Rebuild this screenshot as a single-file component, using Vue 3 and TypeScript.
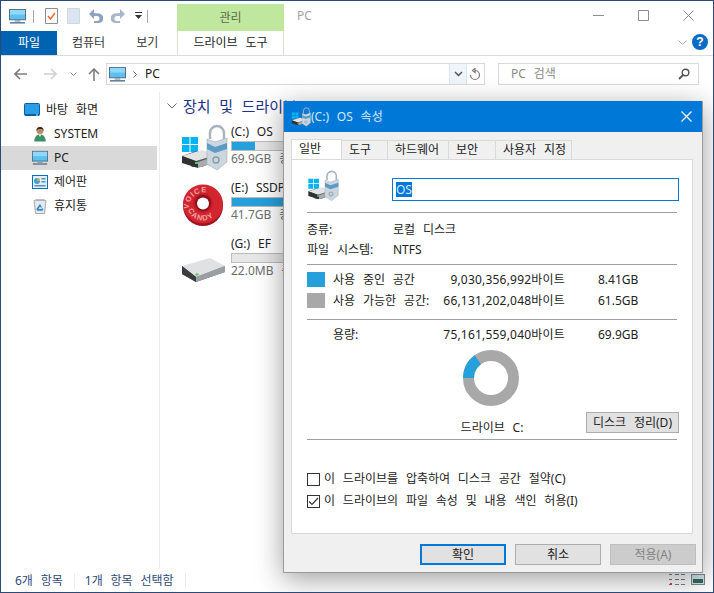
<script setup lang="ts">
// Windows 10 Explorer with the drive properties dialog on top
interface NavItem { label: string; icon: string; indent: boolean; active?: boolean }
interface Drive { name: string; size: string; icon: string; used: number }

const navItems: NavItem[] = [
  { label: '바탕 화면', icon: '#i-desktop', indent: false },
  { label: 'SYSTEM', icon: '#i-user', indent: true },
  { label: 'PC', icon: '#i-pc', indent: true, active: true },
  { label: '제어판', icon: '#i-panel', indent: true },
  { label: '휴지통', icon: '#i-bin', indent: true },
]

const drives: Drive[] = [
  { name: '(C:) OS', size: '69.9GB 중', icon: '#i-os', used: 23 },
  { name: '(E:) SSDPR', size: '41.7GB 중', icon: '#i-candy', used: 93 },
  { name: '(G:) EF', size: '22.0MB 중', icon: '#i-hdd', used: 0 },
]

const tabs = ['도구', '하드웨어', '보안', '사용자 지정']
const tabWidths = [46, 61, 47, 76]
</script>

<template>
  <div class="window">
    <svg width="0" height="0" class="defs">
      <defs>
        <symbol id="i-pc" viewBox="0 0 18 16">
          <rect x="0.5" y="0.5" width="17" height="11" fill="#5cc0f0" stroke="#4a6a86" />
          <rect x="1" y="1" width="16" height="5" fill="#8fd8f8" />
          <rect x="6" y="12" width="6" height="1.5" fill="#8aa0b4" />
          <rect x="1" y="14" width="16" height="1.5" fill="#51718f" />
        </symbol>
        <symbol id="i-desktop" viewBox="0 0 16 14">
          <rect x="0.5" y="0.5" width="15" height="12" rx="1" fill="#2a9fe8" stroke="#0f5f9c" />
          <rect x="1" y="11" width="14" height="2" fill="#0f5f9c" />
          <rect x="12" y="11.5" width="2" height="1" fill="#d8efff" />
        </symbol>
        <symbol id="i-user" viewBox="0 0 16 18">
          <circle cx="8" cy="5" r="4" fill="#b98a68" />
          <path d="M4 5a4 4 0 0 1 8 0c-1-2-6-2-8 0z" fill="#3d2a1e" />
          <path d="M1.5 17.5c0-5 2.5-8 6.5-8s6.5 3 6.500 8z" fill="#3f8f66" />
          <path d="M6.500 9.500h3l-1.500 3z" fill="#eef5ee" />
        </symbol>
        <symbol id="i-panel" viewBox="0 0 16 14">
          <rect x="0.5" y="0.5" width="15" height="13" fill="#dff1fb" stroke="#0f6fb4" />
          <circle cx="5" cy="6" r="3" fill="#3aa0dc" />
          <path d="M5 6V3a3 3 0 0 1 3 3z" fill="#f2a52d" />
          <rect x="9.500" y="3" width="4" height="1.500" fill="#5a8fb8" />
          <rect x="9.500" y="6" width="4" height="1.500" fill="#5a8fb8" />
          <rect x="2.500" y="10" width="11" height="1.500" fill="#5a8fb8" />
        </symbol>
        <symbol id="i-bin" viewBox="0 0 14 16">
          <path d="M1 2.500h12l-1.500 13h-9z" fill="#e4e9ed" stroke="#8e99a3" stroke-width="0.800" />
          <path d="M1 2.500l2-1.500h8l2 1.500z" fill="#b7c0c8" />
          <path d="M7 6l2 3.500h-1.500l-.5-1-1.500 2.500h3l.8-1.200 1 1.700-1 1.300h-5l-1-1.800z" fill="#2f86c8" />
        </symbol>
        <symbol id="i-hdd" viewBox="0 0 48 48">
          <path d="M2 30v8l14 8 29-10v-6z" fill="#55595d" />
          <path d="M16 41l29-11v6l-29 10z" fill="#9b9fa3" />
          <path d="M2 30l28-8 15 8-29 11z" fill="#dfe1e2" />
          <path d="M2 30l14 11v5l-14-8z" fill="#3a3d40" />
          <rect x="15.500" y="37.500" width="3" height="2" fill="#4ccb4c" />
        </symbol>
        <symbol id="i-os" viewBox="0 0 48 48">
          <path d="M2 13h7.500v7H2zM10.500 13H18v7h-7.500zM2 21h7.500v7H2zM10.500 21H18v7h-7.500z" fill="#05b4f0" />
          <path d="M2 32l10 11h10l14-6v-8l-20-2z" fill="#55595d" />
          <path d="M2 32l20-6 14 5-20 6z" fill="#e2e3e4" />
          <path d="M2 32l16 6v6l-16-5z" fill="#2f3235" />
          <path d="M18 38l18-6v6l-18 6z" fill="#a8acaf" />
          <rect x="15" y="38" width="3" height="2" fill="#4ccb4c" />
          <path d="M30 15V9a7 7 0 0 1 14 0v6" fill="none" stroke="#a9b2b9" stroke-width="2.400" />
          <path d="M27 15l8 3 12-4v24l-10 8-10-6z" fill="#cbd6de" stroke="#9eaeba" stroke-width="0.600" />
          <path d="M27 19l8 4 12-4v6l-12 4-8-4z" fill="#5c9cc4" />
          <circle cx="36" cy="36" r="3" fill="none" stroke="#8c9aa5" stroke-width="1.400" />
        </symbol>
        <symbol id="i-candy" viewBox="0 0 48 48">
          <ellipse cx="23" cy="26" rx="20" ry="20" fill="#a01420" />
          <ellipse cx="23" cy="24" rx="20" ry="19.500" fill="#d3252f" />
          <circle cx="23" cy="23" r="10" fill="#c01c28" />
          <circle cx="23" cy="23" r="8" fill="#8e0f1a" />
          <circle cx="23" cy="23.500" r="6" fill="#fff" />
          <path id="candy-top" d="M9 29a15 15 0 0 1 28 -9" fill="none" />
          <path id="candy-bottom" d="M7 25a16 16 0 0 0 31 5" fill="none" />
          <text class="candy-text"><textPath href="#candy-top">VOICE</textPath></text>
          <text class="candy-text"><textPath href="#candy-bottom" startOffset="5">CANDY</textPath></text>
        </symbol>
      </defs>
    </svg>

    <div class="title-row">
      <svg class="qa-pc" width="17" height="15"><use href="#i-pc" /></svg>
      <span class="qa-sep"></span>
      <svg class="qa-doc" width="13" height="16" viewBox="0 0 13 16">
        <path d="M.5.500h12v15H.500z" fill="#fff" stroke="#8a8f94" />
        <path d="M3 8l2.500 3L10 5" fill="none" stroke="#e8662c" stroke-width="1.400" />
      </svg>
      <svg class="qa-blank" width="13" height="16" viewBox="0 0 13 16">
        <path d="M.5.500h12v15H.500z" fill="#dbe5f1" stroke="#cdd8e5" />
      </svg>
      <svg class="qa-undo" width="15" height="14" viewBox="0 0 15 14">
        <path d="M6 0L1 5l5 5V7h3a2.500 2.500 0 0 1 0 5H6v2h4a4.500 4.500 0 0 0 1-9.500L6 4z" fill="#8ea2bf" />
      </svg>
      <svg class="qa-redo" width="15" height="14" viewBox="0 0 15 14">
        <path d="M9 0l5 5-5 5V7H6a2.500 2.500 0 0 0 0 5h3v2H5A4.500 4.500 0 0 1 4 4.500L9 4z" fill="#a9b6ca" />
      </svg>
      <svg class="qa-drop" width="7" height="8" viewBox="0 0 7 8">
        <rect width="7" height="1" fill="#333" />
        <path d="M0 3h7L3.500 7z" fill="#333" />
      </svg>
      <span class="qa-sep last"></span>
      <div class="context-head">관리</div>
      <span class="win-title">PC</span>
      <div class="win-buttons">
        <svg width="11" height="11" viewBox="0 0 11 11"><path d="M0 5.500h11" stroke="#8c8c8c" /></svg>
        <svg width="11" height="11" viewBox="0 0 11 11"><path d="M.5.500h10v10H.5z" fill="none" stroke="#8c8c8c" /></svg>
        <svg width="11" height="11" viewBox="0 0 11 11"><path d="M.5.500l10 10M10.500.500l-10 10" stroke="#8c8c8c" /></svg>
      </div>
    </div>

    <div class="tab-row">
      <div class="file-tab">파일</div>
      <div class="rib-tab computer">컴퓨터</div>
      <div class="rib-tab view">보기</div>
      <div class="context-tab">드라이브 도구</div>
      <svg class="rib-chev" width="9" height="6" viewBox="0 0 9 6"><path d="M.5.500l4 4 4-4" fill="none" stroke="#a8a8a8" /></svg>
      <span class="help">?</span>
    </div>

    <div class="address-row">
      <svg class="nav-arrow" width="13" height="12" viewBox="0 0 13 12"><path d="M6 1L1 6l5 5M1 6h12" fill="none" stroke="#7d7d7d" stroke-width="1.600" /></svg>
      <svg class="nav-arrow fwd" width="13" height="12" viewBox="0 0 13 12"><path d="M7 1l5 5-5 5M12 6H0" fill="none" stroke="#d0d0d0" stroke-width="1.600" /></svg>
      <svg class="nav-down" width="7" height="5" viewBox="0 0 7 5"><path d="M.5.500l3 3 3-3" fill="none" stroke="#8a8a8a" /></svg>
      <svg class="nav-arrow up" width="12" height="13" viewBox="0 0 12 13"><path d="M1 6l5-5 5 5M6 1v12" fill="none" stroke="#7d7d7d" stroke-width="1.600" /></svg>
      <div class="address">
        <svg width="17" height="15"><use href="#i-pc" /></svg>
        <svg class="crumb" width="4" height="7" viewBox="0 0 4 7"><path d="M.5.500l3 3-3 3" fill="none" stroke="#666" /></svg>
        <span class="crumb-text">PC</span>
        <span class="addr-drop"><svg width="9" height="6" viewBox="0 0 9 6"><path d="M1 1l3.500 3.500L8 1" fill="none" stroke="#555" stroke-width="1.500" /></svg></span>
        <svg class="refresh" width="12" height="13" viewBox="0 0 12 13"><path d="M6 2.500a4.500 4.500 0 1 1-4.500 4.500M6 .500v4l-2.500-2z" fill="none" stroke="#777" stroke-width="1.200" /></svg>
      </div>
      <div class="search">
        <span>PC 검색</span>
        <svg width="12" height="12" viewBox="0 0 12 12"><circle cx="7.500" cy="4.500" r="3.300" fill="none" stroke="#555" stroke-width="1.400" /><path d="M5 7l-4 4" stroke="#555" stroke-width="1.800" /></svg>
      </div>
    </div>

    <div class="body-row">
      <nav class="nav">
        <div v-for="item in navItems" :key="item.label" class="nav-item" :class="{ active: item.active, indent: item.indent }">
          <svg class="nav-icon" width="16" height="16"><use :href="item.icon" /></svg>
          <span>{{ item.label }}</span>
        </div>
      </nav>
      <main class="content">
        <div class="group-head">
          <svg width="10" height="6" viewBox="0 0 10 6"><path d="M.5.500l4.500 4.500L9.500.500" fill="none" stroke="#6b6b6b" /></svg>
          <span>장치 및 드라이브 (6)</span>
        </div>
        <div v-for="d in drives" :key="d.name" class="drive">
          <svg class="drive-icon" width="48" height="48"><use :href="d.icon" /></svg>
          <div class="drive-info">
            <div class="drive-name">{{ d.name }}</div>
            <div class="drive-bar"><div class="drive-used" :style="{ width: d.used + 'px' }"></div></div>
            <div class="drive-size">{{ d.size }}</div>
          </div>
        </div>
      </main>
    </div>

    <div class="status-row">
      <span class="stat first">6개 항목</span>
      <span class="stat">1개 항목 선택함</span>
      <div class="view-icons">
        <svg width="16" height="11" viewBox="0 0 16 11"><path d="M0 .500h3M0 5.500h3M0 10.500h3M6 .500h4M6 5.500h4M6 10.500h4M12 .500h4M12 5.500h4M12 10.500h4" stroke="#6f7f90" /><rect x="1" y="9" width="2" height="2" fill="#d83b3b" /></svg>
        <svg width="14" height="11" viewBox="0 0 14 11"><rect x=".5" y=".5" width="13" height="10" fill="#cfe3ef" stroke="#7c8a96" /><rect x="2" y="5" width="10" height="4" fill="#356b55" /></svg>
      </div>
    </div>

    <!-- floating properties dialog -->
    <section class="dialog">
      <header class="dlg-title">
        <svg width="20" height="20"><use href="#i-os" /></svg>
        <span>(C:) OS 속성</span>
        <svg class="dlg-close" width="11" height="11" viewBox="0 0 11 11"><path d="M.5.500l10 10M10.500.500l-10 10" stroke="#fff" stroke-width="1.200" /></svg>
      </header>
      <div class="dlg-tabs">
        <div class="dlg-tab active">일반</div>
        <div v-for="(t, i) in tabs" :key="t" class="dlg-tab" :style="{ width: tabWidths[i] + 'px' }">{{ t }}</div>
      </div>
      <div class="panel">
        <div class="name-row">
          <svg width="32" height="32"><use href="#i-os" /></svg>
          <div class="name-input"><span class="sel">OS</span></div>
        </div>
        <hr class="sep" />
        <div class="info-row type"><span class="info-key">종류:</span><span>로컬 디스크</span></div>
        <div class="info-row"><span class="info-key">파일 시스템:</span><span>NTFS</span></div>
        <hr class="sep fs" />
        <div class="space-row first-space">
          <span class="swatch used"></span><span class="space-label">사용 중인 공간</span>
          <span class="bytes">9,030,356,992바이트</span><span class="gb">8.41GB</span>
        </div>
        <div class="space-row">
          <span class="swatch free"></span><span class="space-label">사용 가능한 공간:</span>
          <span class="bytes">66,131,202,048바이트</span><span class="gb">61.5GB</span>
        </div>
        <hr class="sep cap" />
        <div class="space-row capacity">
          <span class="swatch none"></span><span class="space-label">용량:</span>
          <span class="bytes">75,161,559,040바이트</span><span class="gb">69.9GB</span>
        </div>
        <div class="chart-row">
          <svg width="58" height="58" viewBox="0 0 58 58">
            <circle cx="29" cy="29" r="22.500" fill="none" stroke="#a8a8a8" stroke-width="11" />
            <path d="M6.500 29A22.500 22.500 0 0 1 15.800 10.800" fill="none" stroke="#26a0da" stroke-width="11" />
          </svg>
        </div>
        <div class="drive-row">
          <span class="drive-label">드라이브 C:</span>
          <button class="clean-btn" type="button">디스크 정리(D)</button>
        </div>
        <hr class="sep bottom" />
        <label class="check-row first-check"><span class="check"></span>이 드라이브를 압축하여 디스크 공간 절약(C)</label>
        <label class="check-row"><span class="check"><svg width="11" height="9" viewBox="0 0 11 9"><path d="M1 4.500l3 3 6-6.500" fill="none" stroke="#333" stroke-width="1.200" /></svg></span>이 드라이브의 파일 속성 및 내용 색인 허용(I)</label>
      </div>
      <footer class="dlg-foot">
        <button class="btn primary" type="button">확인</button>
        <button class="btn" type="button">취소</button>
        <button class="btn disabled" type="button">적용(A)</button>
      </footer>
    </section>
  </div>
</template>

<style>
html, body { margin: 0; background: #fff; }
</style>

<style scoped>
.window {
  position: relative;
  width: 714px;
  height: 593px;
  box-sizing: border-box;
  border: 1px solid #2b4a78;
  background: #fff;
  overflow: hidden;
  font: 12px/16px "Noto Sans", "Noto Sans CJK KR", sans-serif;
  word-spacing: 4.700px;
  color: #222;
  display: flex;
  flex-direction: column;
}
.defs { position: absolute; }
.candy-text { font: 700 7.500px "Liberation Sans", sans-serif; fill: #f3a6a6; letter-spacing: 1px; word-spacing: 0; }

.title-row { height: 30px; display: flex; align-items: center; flex: none; position: relative; }
.qa-pc { margin-left: 8px; }
.qa-sep { width: 1px; height: 13px; background: #a8a8a8; margin-left: 7px; }
.qa-doc { margin-left: 11px; }
.qa-blank { margin-left: 9px; }
.qa-undo { margin-left: 8px; }
.qa-redo { margin-left: 8px; }
.qa-drop { margin-left: 9px; }
.qa-sep.last { margin-left: 5px; }
.context-head {
  align-self: flex-end;
  width: 107px;
  height: 27px;
  margin-left: 29px;
  background: #bfe89e;
  color: #5a6a4d;
  text-align: center;
  line-height: 27px;
}
.win-title { margin-left: 13px; color: #a4a4a4; }
.win-buttons { position: absolute; right: 19px; top: 9px; display: flex; gap: 34px; }

.tab-row { height: 24px; display: flex; align-items: stretch; flex: none; border-bottom: 1px solid #dadbdc; position: relative; line-height: 24px; }
.file-tab { width: 56px; background: #0063b1; color: #fff; text-align: center; }
.rib-tab { color: #333; }
.computer { margin-left: 15px; }
.view { margin-left: 31px; }
.context-tab {
  position: absolute;
  left: 176px;
  top: 0;
  width: 107px;
  height: 24px;
  box-sizing: border-box;
  border: 1px solid #d8e4ca;
  border-width: 0 1px;
  background: #fff;
  text-align: center;
}
.rib-chev { position: absolute; right: 26px; top: 9px; }
.help {
  position: absolute;
  right: 5px;
  top: 3px;
  width: 16px;
  height: 16px;
  border-radius: 50%;
  background: #0a6cc4;
  color: #fff;
  font: 700 12px/16px "Liberation Sans", sans-serif;
  text-align: center;
}

.address-row { height: 36px; display: flex; align-items: center; flex: none; position: relative; }
.nav-arrow { margin-left: 13px; }
.nav-arrow.fwd { margin-left: 17px; }
.nav-down { margin-left: 13px; }
.nav-arrow.up { margin-left: 11px; }
.address {
  width: 379px;
  height: 22px;
  margin-left: 6px;
  box-sizing: border-box;
  border: 1px solid #d9d9d9;
  display: flex;
  align-items: center;
  padding-left: 2px;
  position: relative;
}
.crumb { margin-left: 7px; }
.crumb-text { margin-left: 8px; }
.addr-drop { position: absolute; right: 17px; top: 0; width: 16px; height: 20px; background: #eef6fb; border: 0 solid #d5e8f3; border-width: 0 1px; display: flex; align-items: center; justify-content: center; }
.refresh { position: absolute; right: 3px; top: 4px; }
.search {
  width: 201px;
  height: 22px;
  margin-left: 13px;
  box-sizing: border-box;
  border: 1px solid #d9d9d9;
  display: flex;
  align-items: center;
  justify-content: space-between;
  padding: 0 8px 0 12px;
  color: #8a8a8a;
}

.body-row { flex: 1; display: flex; min-height: 0; }
.nav { width: 159px; flex: none; box-sizing: border-box; padding-top: 6px; border-right: 1px solid #ececec; }
.nav-item { height: 24px; width: 156px; display: flex; align-items: center; gap: 6px; padding-left: 23px; box-sizing: border-box; }
.nav-item.indent { padding-left: 31px; }
.nav-item.active { background: #d9d9d9; }
.content { flex: 1; padding-left: 7px; overflow: hidden; }
.group-head { height: 32px; display: flex; align-items: center; gap: 6px; font-size: 15px; color: #1e3287; box-sizing: border-box; padding-bottom: 5px; white-space: nowrap; }
.drive { height: 56px; display: flex; gap: 3px; margin-left: 13px; }
.drive-icon { flex: none; }
.drive-name { line-height: 16px; white-space: nowrap; }
.drive-bar { width: 256px; height: 10px; margin-top: 1px; background: #e6e6e6; border: 1px solid #bcbcbc; box-sizing: border-box; }
.drive-used { height: 100%; background: #26a0da; }
.drive-size { color: #6d6d6d; line-height: 16px; white-space: nowrap; }
.status-row { height: 23px; flex: none; display: flex; align-items: center; color: #2f4a78; position: relative; }
.stat { margin-left: 10px; padding-right: 11px; border-right: 1px solid #ececec; }
.stat.first { margin-left: 14px; }
.view-icons { position: absolute; right: 8px; top: 5px; display: flex; gap: 6px; }

.dialog {
  position: absolute;
  left: 282px;
  top: 100px;
  width: 420px;
  height: 472px;
  box-sizing: border-box;
  border: 1px solid #9a9a9a;
  border-top: 0;
  background: #f0f0f0;
  box-shadow: 0 6px 26px rgba(0, 0, 0, 0.38);
  display: flex;
  flex-direction: column;
}
.dlg-title { height: 31px; flex: none; background: #0078d7; color: #d6e9f8; display: flex; align-items: center; padding-left: 7px; font-size: 12px; position: relative; }
.dlg-close { position: absolute; right: 10px; top: 10px; }
.dlg-tabs { display: flex; align-items: flex-end; height: 27px; flex: none; padding-left: 7px; }
.dlg-tab { height: 19px; box-sizing: border-box; border: 1px solid #d9d9d9; border-bottom: 0; border-left: 0; padding-left: 7px; line-height: 18px; white-space: nowrap; }
.dlg-tab.active { width: 51px; height: 21px; background: #fff; border-left: 1px solid #d9d9d9; position: relative; top: 1px; }
.panel { height: 375px; flex: none; margin: 0 9px 0 7px; box-sizing: border-box; background: #fff; border: 1px solid #d9d9d9; padding-left: 15px; position: relative; }
.name-row { display: flex; align-items: center; padding-top: 10px; height: 42px; box-sizing: border-box; }
.name-row svg { flex: none; }
.name-input { flex: none; margin-left: 53px; width: 287px; height: 23px; box-sizing: border-box; border: 1px solid #0078d7; padding: 2px 3px; line-height: 17px; margin-top: 6px; }
.sel { background: #0078d7; color: #d8ecfa; display: inline-block; height: 15px; line-height: 15px; }
.sep { border: 0; height: 1px; background: #a0a0a0; margin: 0; width: 370px; }
.name-row + .sep { margin-top: 10px; }
.info-row { display: flex; height: 21px; line-height: 21px; }
.info-row.type { margin-top: 5px; position: relative; top: 1px; }
.info-key { width: 86px; }
.sep.fs { margin-top: 4px; }
.space-row { display: flex; align-items: center; height: 21px; }
.first-space { margin-top: 4px; }
.swatch { width: 18px; height: 15px; flex: none; }
.swatch.used { background: #26a0da; }
.swatch.free { background: #a8a8a8; }
.space-label { margin-left: 8px; width: 110px; white-space: nowrap; }
.bytes { width: 122px; text-align: right; white-space: nowrap; letter-spacing: 0.200px; }
.gb { margin-left: 33px; }
.sep.cap { margin-top: 8px; }
.capacity { margin-top: 4px; }
.chart-row { display: flex; justify-content: center; margin-top: 4px; width: 368px; height: 58px; }
.drive-row { position: relative; height: 32px; display: flex; justify-content: center; width: 370px; }
.drive-label { margin-top: 13px; }
.clean-btn { position: absolute; left: 279px; top: 5px; width: 93px; height: 21px; background: #e1e1e1; border: 1px solid #adadad; }
.sep.bottom { margin-top: 0; }
button { font: inherit; word-spacing: inherit; color: #222; padding: 0; }
.check-row { display: flex; align-items: center; gap: 4px; height: 22px; }
.first-check { margin-top: 28px; }
.check { width: 13px; height: 13px; box-sizing: border-box; border: 1px solid #333; display: flex; align-items: center; justify-content: center; }
.dlg-foot { display: flex; padding: 10px 6px 0 0; gap: 9px; justify-content: flex-end; }
.btn { width: 86px; height: 21px; background: #e1e1e1; border: 1px solid #adadad; box-sizing: border-box; }
.btn.primary { border: 2px solid #0078d7; }
.btn.disabled { background: #ccc; border-color: #bfbfbf; color: #838383; }
</style>
